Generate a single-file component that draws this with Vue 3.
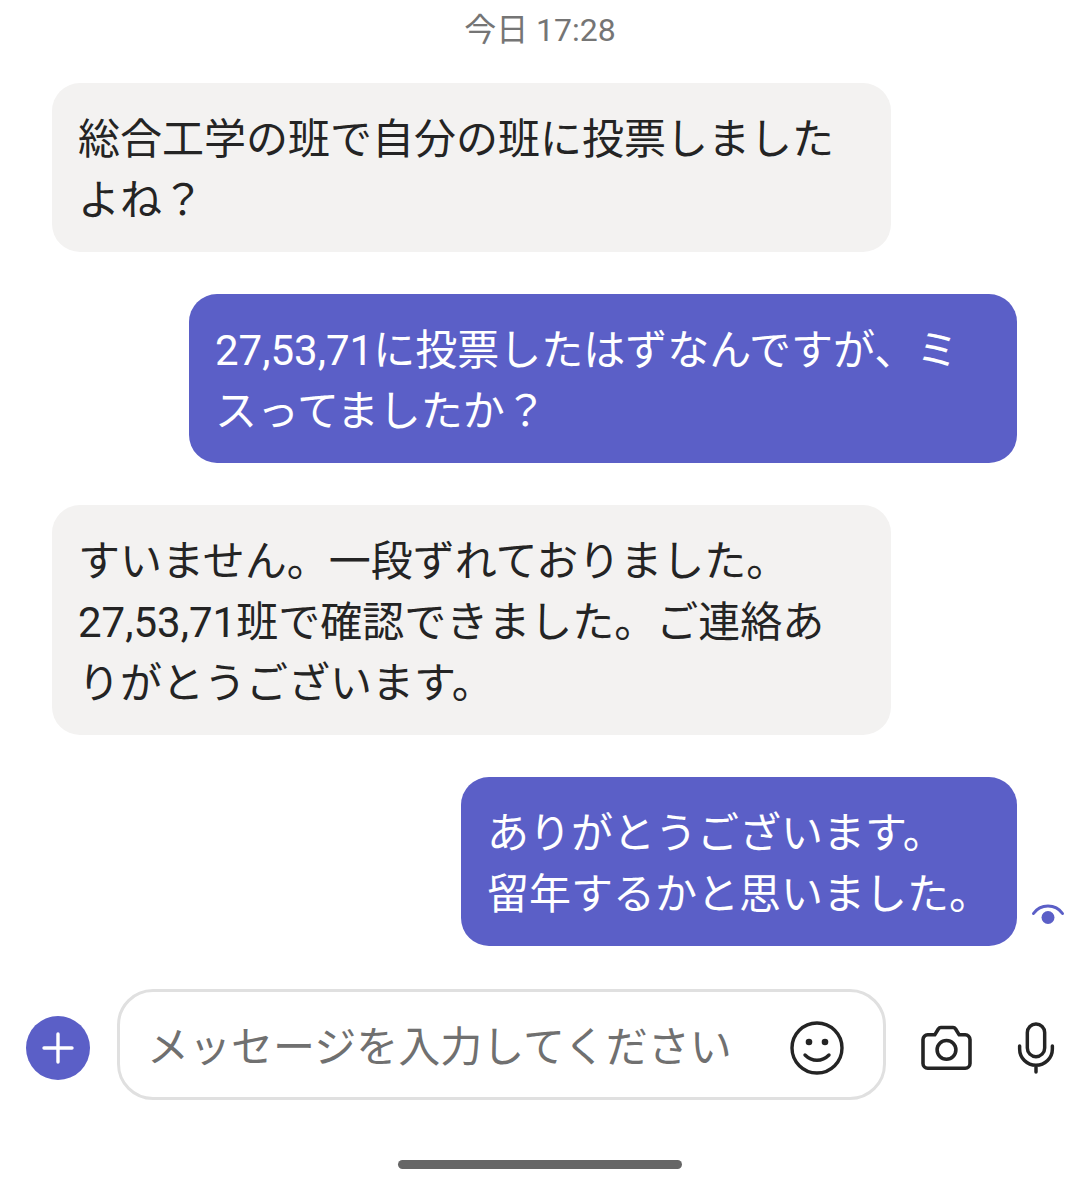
<script setup>
const messages = [
  { side: 'in', width: 839, lines: ['総合工学の班で自分の班に投票しました', 'よね？'] },
  { side: 'out', width: 828, lines: ['27,53,71に投票したはずなんですが、ミ', 'スってましたか？'] },
  { side: 'in', width: 839, lines: ['すいません。一段ずれておりました。', '27,53,71班で確認できました。ご連絡あ', 'りがとうございます。'] },
  { side: 'out', width: 556, seen: true, lines: ['ありがとうございます。', '留年するかと思いました。'] }
]
</script>

<template>
  <div class="screen">
    <div class="time">今日 17:28</div>
    <div class="thread">
      <div v-for="(m, i) in messages" :key="i" class="row" :class="m.side">
        <div class="bubble" :class="m.side" :style="{ width: m.width + 'px' }">
          <div v-for="(l, j) in m.lines" :key="j" class="line">{{ l }}</div>
        </div>
        <svg v-if="m.seen" class="seen" viewBox="0 0 34 24" width="34" height="24">
          <path d="M2.5 10.500C6 5.500 11 3 17 3s11 2.500 14.500 7.500" fill="none" stroke="#5b5fc7" stroke-width="3" stroke-linecap="round"/>
          <circle cx="17" cy="14.500" r="6.500" fill="#5b5fc7"/>
        </svg>
      </div>
    </div>
    <div class="composer">
      <div class="plus">
        <svg viewBox="0 0 32 32" width="32" height="32">
          <path d="M16 2v28M2 16h28" stroke="#fff" stroke-width="3.400" stroke-linecap="round"/>
        </svg>
      </div>
      <div class="input">
        <span class="placeholder">メッセージを入力してください</span>
        <svg class="emoji" viewBox="0 0 54 54" width="54" height="54">
          <circle cx="27" cy="27" r="25" fill="none" stroke="#242424" stroke-width="3.400"/>
          <circle cx="19" cy="21" r="3.300" fill="#242424"/>
          <circle cx="35" cy="21" r="3.300" fill="#242424"/>
          <path d="M15 34c7 7 17 7 24 0" fill="none" stroke="#242424" stroke-width="3.400" stroke-linecap="round"/>
        </svg>
      </div>
      <svg class="camera" viewBox="0 0 54 50" width="51" height="47">
        <path d="M7 11.500h7.500l3.800-6.200c.7-1 1.500-1.500 2.700-1.500h13c1.200 0 2 .5 2.700 1.500l3.800 6.200H47a5 5 0 0 1 5 5V42a5 5 0 0 1-5 5H7a5 5 0 0 1-5-5V16.500a5 5 0 0 1 5-5z" fill="none" stroke="#242424" stroke-width="3.800" stroke-linejoin="round"/>
        <circle cx="27" cy="27.500" r="10" fill="none" stroke="#242424" stroke-width="3.800"/>
      </svg>
      <svg class="mic" viewBox="0 0 38 54" width="38" height="52">
        <rect x="10" y="2" width="18" height="34" rx="9" fill="none" stroke="#242424" stroke-width="3.600"/>
        <path d="M2 25v3a17 17 0 0 0 34 0v-3M19 45v7" fill="none" stroke="#242424" stroke-width="3.600" stroke-linecap="round"/>
      </svg>
    </div>
    <div class="home"></div>
  </div>
</template>

<style scoped>
.screen {
  width: 1080px;
  height: 1194px;
  background: #fff;
  overflow: hidden;
  font-family: Roboto, "Noto Sans CJK JP", sans-serif;
  color: #242424;
}
.time {
  height: 83px;
  padding-top: 9px;
  box-sizing: border-box;
  text-align: center;
  font-size: 32px;
  line-height: 43px;
  color: #757575;
}
.thread {
  display: flex;
  flex-direction: column;
  gap: 42px;
  padding: 0 63px 0 52px;
}
.row { display: flex; position: relative; }
.row.out { justify-content: flex-end; }
.bubble {
  box-sizing: border-box;
  padding: 26px 26px 21px;
  border-radius: 28px;
  font-size: 42px;
  line-height: 61px;
  white-space: nowrap;
}
.bubble.in { background: #f3f2f1; }
.bubble.out { background: #5b5fc7; color: #fff; }
.seen { position: absolute; right: -48px; bottom: 19px; }
.composer {
  display: flex;
  align-items: center;
  margin-top: 43px;
  padding-left: 26px;
}
.plus {
  width: 64px;
  height: 64px;
  border-radius: 50%;
  background: #5b5fc7;
  display: flex;
  align-items: center;
  justify-content: center;
  margin-top: 6px;
}
.input {
  box-sizing: border-box;
  width: 769px;
  height: 111px;
  margin-left: 27px;
  border: 3px solid #e0e0e0;
  border-radius: 36px;
  display: flex;
  align-items: center;
  justify-content: space-between;
  padding: 0 39px 0 27px;
}
.placeholder { font-size: 42px; color: #707070; white-space: nowrap; margin-bottom: 2px; }
.emoji { margin-top: 6px; }
.camera { margin-left: 35px; margin-top: 6px; }
.mic { margin-left: 45px; margin-top: 6px; }
.home {
  width: 284px;
  height: 9px;
  border-radius: 5px;
  background: #666;
  margin: 60px auto 0;
}
</style>
